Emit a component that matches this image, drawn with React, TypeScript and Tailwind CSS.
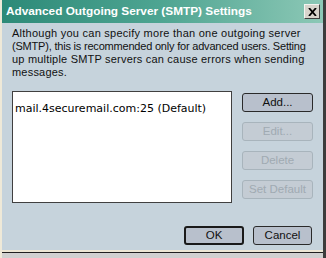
import React from "react";

const font = { fontFamily: "'Liberation Sans', Arial, sans-serif" };

function Btn({ children, disabled, def, w }: { children: React.ReactNode; disabled?: boolean; def?: boolean; w: string }) {
  return (
    <div
      className={`${w} h-[19px] rounded-[3px] flex items-center justify-center text-[11.5px] ${
        def ? "border-2 border-[#1a1a1a]" : disabled ? "border border-[#a8b4bc]" : "border border-[#2a2a2a]"
      } ${disabled ? "bg-[#c4ccd4] text-[#a0aab2]" : "bg-[#b8c0cc] text-[#101010]"}`}
    >
      {children}
    </div>
  );
}

export default function App() {
  return (
    <div className="w-[326px] h-[258px] bg-[#c6d3dc] flex flex-col overflow-hidden border-l-2 border-l-[#efe9d8] border-r-[3px] border-r-[#3c3c3c]" style={font}>
      <div className="h-[23px] shrink-0 flex items-center justify-between pl-[4px] pr-[3px] bg-gradient-to-r from-[#2c8a78] via-[#4ea592] to-[#8cc8b6]">
        <span className="text-white font-bold text-[11.8px] whitespace-nowrap">
          Advanced Outgoing Server (SMTP) Settings
        </span>
        <div className="w-[16px] h-[15px] bg-[#d8d4cc] border border-t-[#f4f4f0] border-l-[#f4f4f0] border-b-[#404040] border-r-[#404040] flex items-center justify-center">
          <svg width="9" height="8" viewBox="0 0 9 8">
            <path d="M1 0 L8 8 M8 0 L1 8" stroke="#000" strokeWidth="1.8" />
          </svg>
        </div>
      </div>
      <div className="flex-1 flex flex-col pl-[10px] pr-[10px]">
        <p className="mt-[4px] text-[11px] leading-[13px] text-[#111] whitespace-nowrap">
          <span className="tracking-[0.25px]">Although you can specify more than one outgoing server</span>
          <br />
          <span className="tracking-[-0.2px]">(SMTP), this is recommended only for advanced users. Setting</span>
          <br />
          <span className="tracking-[0.2px]">up multiple SMTP servers can cause errors when sending</span>
          <br />
          <span className="tracking-[0.2px]">messages.</span>
        </p>
        <div className="flex mt-[12px] gap-[10px]">
          <div className="w-[221px] h-[112px] bg-white border border-[#404040] pl-[2px] pt-[3px]">
            <span className="text-[11px] text-black" style={{ fontFamily: "'DejaVu Sans', sans-serif" }}>mail.4securemail.com:25 (Default)</span>
          </div>
          <div className="flex flex-col gap-[10px] pt-[2px]">
            <Btn w="w-[71px]">Add...</Btn>
            <Btn w="w-[71px]" disabled>Edit...</Btn>
            <Btn w="w-[71px]" disabled>Delete</Btn>
            <Btn w="w-[71px]" disabled>Set Default</Btn>
          </div>
        </div>
        <div className="flex justify-end gap-[9px] mt-[23px] pr-[1px]">
          <Btn w="w-[60px]" def>OK</Btn>
          <Btn w="w-[59px]">Cancel</Btn>
        </div>
      </div>
      <div className="h-[2px] bg-[#ece6d4] shrink-0" />
      <div className="h-[6px] bg-[#d0d0d0] shrink-0 border-t border-t-[#202020]" />
    </div>
  );
}
